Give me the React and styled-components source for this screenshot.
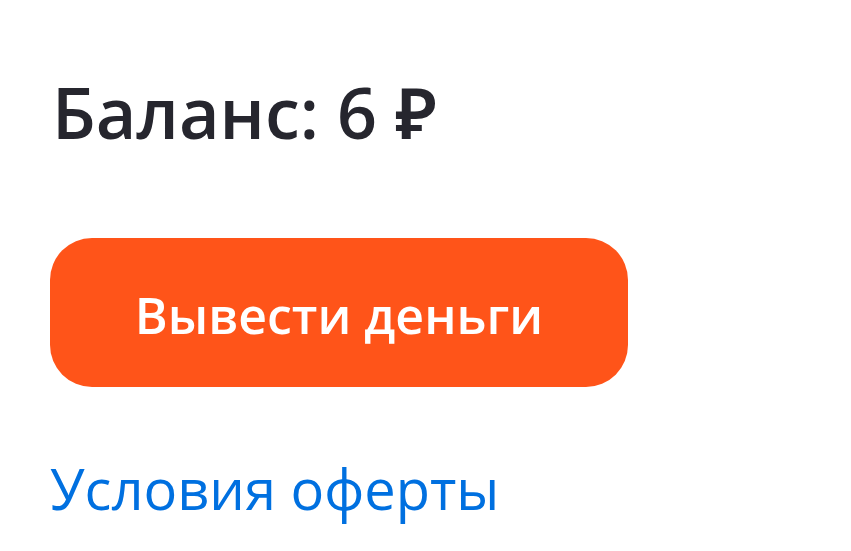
import React from 'react';
import styled, { createGlobalStyle } from 'styled-components';

const GlobalStyle = createGlobalStyle`
  body {
    margin: 0;
    background: #fff;
    font-family: "Open Sans", "Noto Sans", sans-serif;
  }
`;

const Wrapper = styled.div`
  display: flex;
  flex-direction: column;
  align-items: flex-start;
  padding: 67px 50px 0;
`;

const Balance = styled.h1`
  margin: 0 0 0 2px;
  font-size: 70px;
  font-weight: 600;
  line-height: 1.3;
  color: #26262e;
`;

const WithdrawButton = styled.button`
  margin-top: 80px;
  width: 578px;
  height: 149px;
  padding: 4px 0 0;
  border: none;
  border-radius: 42px;
  background: #ff5419;
  color: #fff;
  font-family: inherit;
  font-size: 50px;
  font-weight: 600;
  cursor: pointer;
`;

const OfferLink = styled.a`
  margin-top: 65px;
  font-size: 56px;
  line-height: 1.3;
  color: #0070e0;
  text-decoration: none;
`;

export default function App() {
  return (
    <Wrapper>
      <GlobalStyle />
      <Balance>Баланс: 6 ₽</Balance>
      <WithdrawButton>Вывести деньги</WithdrawButton>
      <OfferLink href="#">Условия оферты</OfferLink>
    </Wrapper>
  );
}
